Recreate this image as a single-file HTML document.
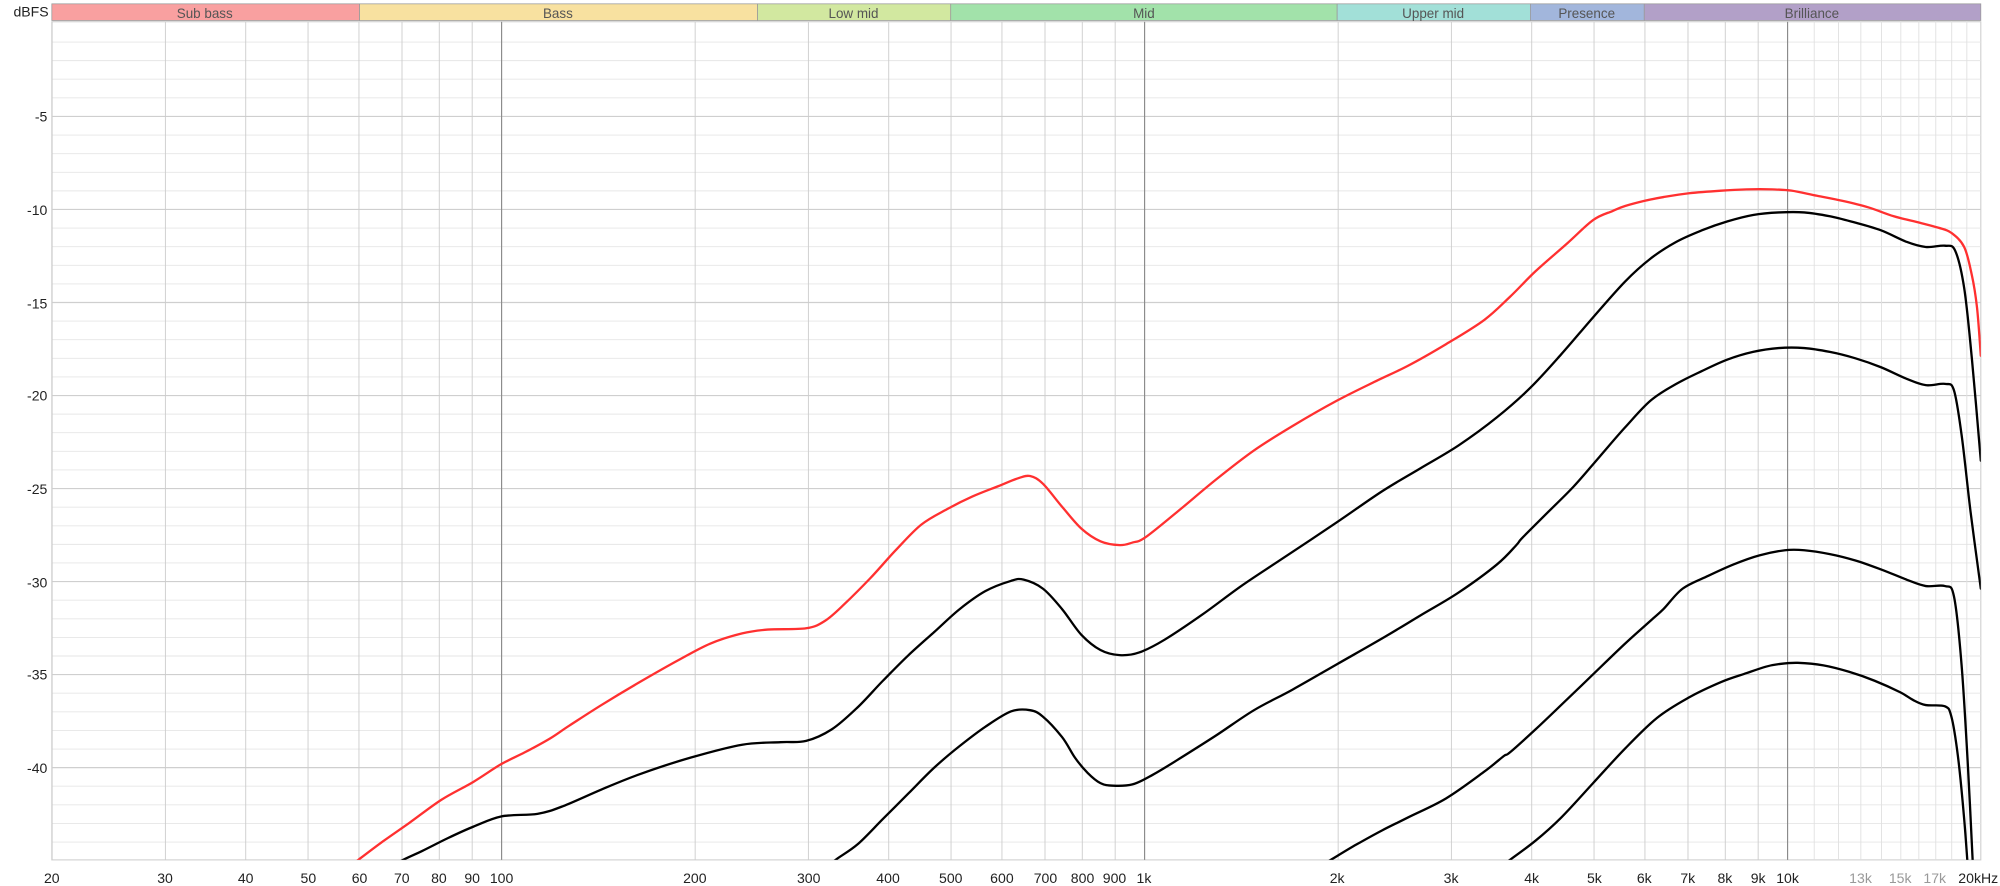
<!DOCTYPE html>
<html><head><meta charset="utf-8">
<style>
html,body{margin:0;padding:0;background:#fff;width:2000px;height:886px;overflow:hidden}
svg{display:block}
text{font-family:"Liberation Sans","DejaVu Sans",sans-serif}
</style></head>
<body>
<svg id="s" width="2000" height="886" viewBox="0 0 1563 692.4" xmlns="http://www.w3.org/2000/svg">
<defs><clipPath id="cp"><rect x="40.5" y="17" width="1507.5" height="655"/></clipPath></defs>
<rect x="0" y="0" width="1563" height="693" fill="#fff"/>
<g id="grid"></g>
<!-- bands -->
<g stroke="#9a9a9a" stroke-width="0.6">
<rect x="40.5" y="3" width="240.5" height="13" fill="#f9a0a0"/>
<rect x="281" y="3" width="311" height="13" fill="#f8e1a0"/>
<rect x="592" y="3" width="151" height="13" fill="#d2e8a0"/>
<rect x="743" y="3" width="302" height="13" fill="#a2e2aa"/>
<rect x="1045" y="3" width="151" height="13" fill="#a2e0d8"/>
<rect x="1196" y="3" width="89" height="13" fill="#a2b6dc"/>
<rect x="1285" y="3" width="263" height="13" fill="#b2a0c8"/>
</g>
<g font-size="10.5" fill="#555" text-anchor="middle">
<text x="160" y="14">Sub bass</text>
<text x="436" y="14">Bass</text>
<text x="667" y="14">Low mid</text>
<text x="894" y="14">Mid</text>
<text x="1120" y="14">Upper mid</text>
<text x="1240" y="14">Presence</text>
<text x="1416" y="14">Brilliance</text>
</g>
<g font-size="11" fill="#222" text-anchor="end">
<text x="38" y="13">dBFS</text>
<text x="37" y="95">-5</text>
<text x="37" y="168">-10</text>
<text x="37" y="241">-15</text>
<text x="37" y="313">-20</text>
<text x="37" y="386">-25</text>
<text x="37" y="459">-30</text>
<text x="37" y="531">-35</text>
<text x="37" y="604">-40</text>
</g>
<g font-size="11" fill="#222" text-anchor="middle">
<text x="40.5" y="690">20</text><text x="129" y="690">30</text><text x="192" y="690">40</text><text x="241" y="690">50</text><text x="281" y="690">60</text><text x="314" y="690">70</text><text x="343" y="690">80</text><text x="369" y="690">90</text><text x="392" y="690">100</text>
<text x="543" y="690">200</text><text x="632" y="690">300</text><text x="694" y="690">400</text><text x="743" y="690">500</text><text x="783" y="690">600</text><text x="817" y="690">700</text><text x="846" y="690">800</text><text x="871" y="690">900</text><text x="894" y="690">1k</text>
<text x="1045" y="690">2k</text><text x="1134" y="690">3k</text><text x="1197" y="690">4k</text><text x="1246" y="690">5k</text><text x="1285" y="690">6k</text><text x="1319" y="690">7k</text><text x="1348" y="690">8k</text><text x="1374" y="690">9k</text><text x="1397" y="690">10k</text>
<text x="1454" y="690" fill="#999">13k</text><text x="1485" y="690" fill="#999">15k</text><text x="1512" y="690" fill="#999">17k</text><text x="1546" y="690">20kHz</text>
</g>
<g id="curves" clip-path="url(#cp)" fill="none" stroke-width="1.8" stroke-linejoin="round" stroke-linecap="round"></g>
</svg>
<script>
var NS="http://www.w3.org/2000/svg";
function X(f){return 392+502.5*(Math.log10(f)-2);}
function Y(d){return 18.3-14.54*d;}
var g=document.getElementById("grid"),h="";
h+='<rect x="40.5" y="17" width="1507.5" height="655" fill="#fff" stroke="#ccc" stroke-width="0.8"/>';
for(var d=-1;d>=-44;d--){var y=Y(d);var maj=(d%5==0);h+='<line x1="40.5" x2="1548" y1="'+y+'" y2="'+y+'" stroke="'+(maj?'#cfcfcf':'#e6e6e6')+'" stroke-width="'+(maj?0.9:0.7)+'"/>';}
var fs=[];
[20,30,40,50,60,70,80,90,100,200,300,400,500,600,700,800,900,1000,2000,3000,4000,5000,6000,7000,8000,9000,10000,11000,12000,13000,14000,15000,16000,17000,18000,19000].forEach(function(f){
var x=X(f);var maj=(f==100||f==1000||f==10000);var c=maj?'#8a8a8a':(f>10000?'#e0e0e0':'#cccccc');
h+='<line x1="'+x+'" x2="'+x+'" y1="17" y2="672" stroke="'+c+'" stroke-width="'+(maj?0.9:0.7)+'"/>';});
g.innerHTML=h;
function path(p){var s="M"+p[0][0]+","+p[0][1];for(var i=0;i<p.length-1;i++){var p0=p[i-1]||p[i],p1=p[i],p2=p[i+1],p3=p[i+2]||p2;
var c1x=p1[0]+(p2[0]-p0[0])/6,c1y=p1[1]+(p2[1]-p0[1])/6,c2x=p2[0]-(p3[0]-p1[0])/6,c2y=p2[1]-(p3[1]-p1[1])/6;
s+=" C"+c1x.toFixed(1)+","+c1y.toFixed(1)+" "+c2x.toFixed(1)+","+c2y.toFixed(1)+" "+p2[0]+","+p2[1];}return s;}
var R=[[275,676],[280,672],[300,657],[320,643],[345,625],[370,611],[392,597],[410,588],[430,577],[445,567],[470,551],[500,533],[530,516],[555,503],[580,495],[600,492],[630,491],[645,485],[660,472],[680,452],[700,430],[720,410],[740,398],[760,388],[780,380],[795,374],[805,372],[815,378],[830,396],[845,413],[860,423],[875,426],[885,424],[895,420],[920,400],[950,375],[980,352],[1010,333],[1045,313],[1075,298],[1100,286],[1130,269],[1160,250],[1180,232],[1200,212],[1225,190],[1245,172],[1260,165],[1270,161],[1285,157],[1300,154],[1320,151],[1345,149],[1365,148],[1385,148],[1400,149],[1420,153],[1440,157],[1460,162],[1480,169],[1500,174],[1515,178],[1525,182],[1535,193],[1541,215],[1545,240],[1548,278]];
var B1=[[305,678],[315,672],[330,665],[350,655],[370,646],[392,638],[420,636],[440,630],[470,617],[500,605],[540,592],[580,582],[610,580],[630,579],[650,570],[670,553],[690,532],[710,512],[730,494],[750,476],[770,462],[790,454],[800,453],[815,460],[830,476],[845,496],[860,508],[875,512],[890,510],[910,500],[940,480],[970,458],[1000,438],[1045,408],[1080,384],[1110,366],[1140,348],[1170,326],[1196,303],[1220,277],[1245,248],[1270,220],[1290,202],[1310,189],[1330,180],[1350,173],[1370,168],[1390,166],[1410,166],[1430,169],[1450,174],[1470,180],[1490,189],[1505,193],[1520,192],[1528,196],[1535,225],[1541,280],[1548,360]];
var B2=[[645,680],[653,672],[670,660],[690,640],[710,620],[730,600],[750,583],[770,568],[790,556],[805,555],[815,560],[830,576],[840,592],[850,604],[860,612],[870,614],[885,613],[900,606],[920,594],[950,575],[980,555],[1010,539],[1045,519],[1080,499],[1110,481],[1140,463],[1170,441],[1185,426],[1190,420],[1210,400],[1230,380],[1250,357],[1270,334],[1290,313],[1310,300],[1330,290],[1350,281],[1370,275],[1390,272],[1410,272],[1430,275],[1450,280],[1470,287],[1490,296],[1505,301],[1520,300],[1527,305],[1533,340],[1540,400],[1548,460]];
var B3=[[1030,678],[1040,672],[1060,660],[1080,649],[1100,639],[1130,624],[1160,603],[1175,591],[1180,588],[1200,570],[1220,551],[1245,527],[1270,503],[1290,485],[1300,476],[1315,460],[1335,450],[1355,441],[1375,434],[1395,430],[1410,430],[1430,433],[1450,438],[1470,445],[1490,453],[1505,458],[1520,458],[1527,466],[1533,520],[1538,600],[1542,680]];
var B4=[[1172,678],[1180,672],[1200,657],[1220,639],[1245,612],[1270,585],[1295,561],[1320,545],[1345,533],[1365,526],[1380,521],[1390,519],[1405,518],[1425,520],[1445,525],[1465,532],[1485,541],[1495,547],[1505,551],[1520,552],[1525,560],[1530,590],[1535,640],[1538,680]];
var c=document.getElementById("curves"),o="";
[B1,B2,B3,B4].forEach(function(p){o+='<path d="'+path(p)+'" stroke="#000"/>';});
o+='<path d="'+path(R)+'" stroke="#ff3030"/>';
c.innerHTML=o;
</script>
</body></html>
